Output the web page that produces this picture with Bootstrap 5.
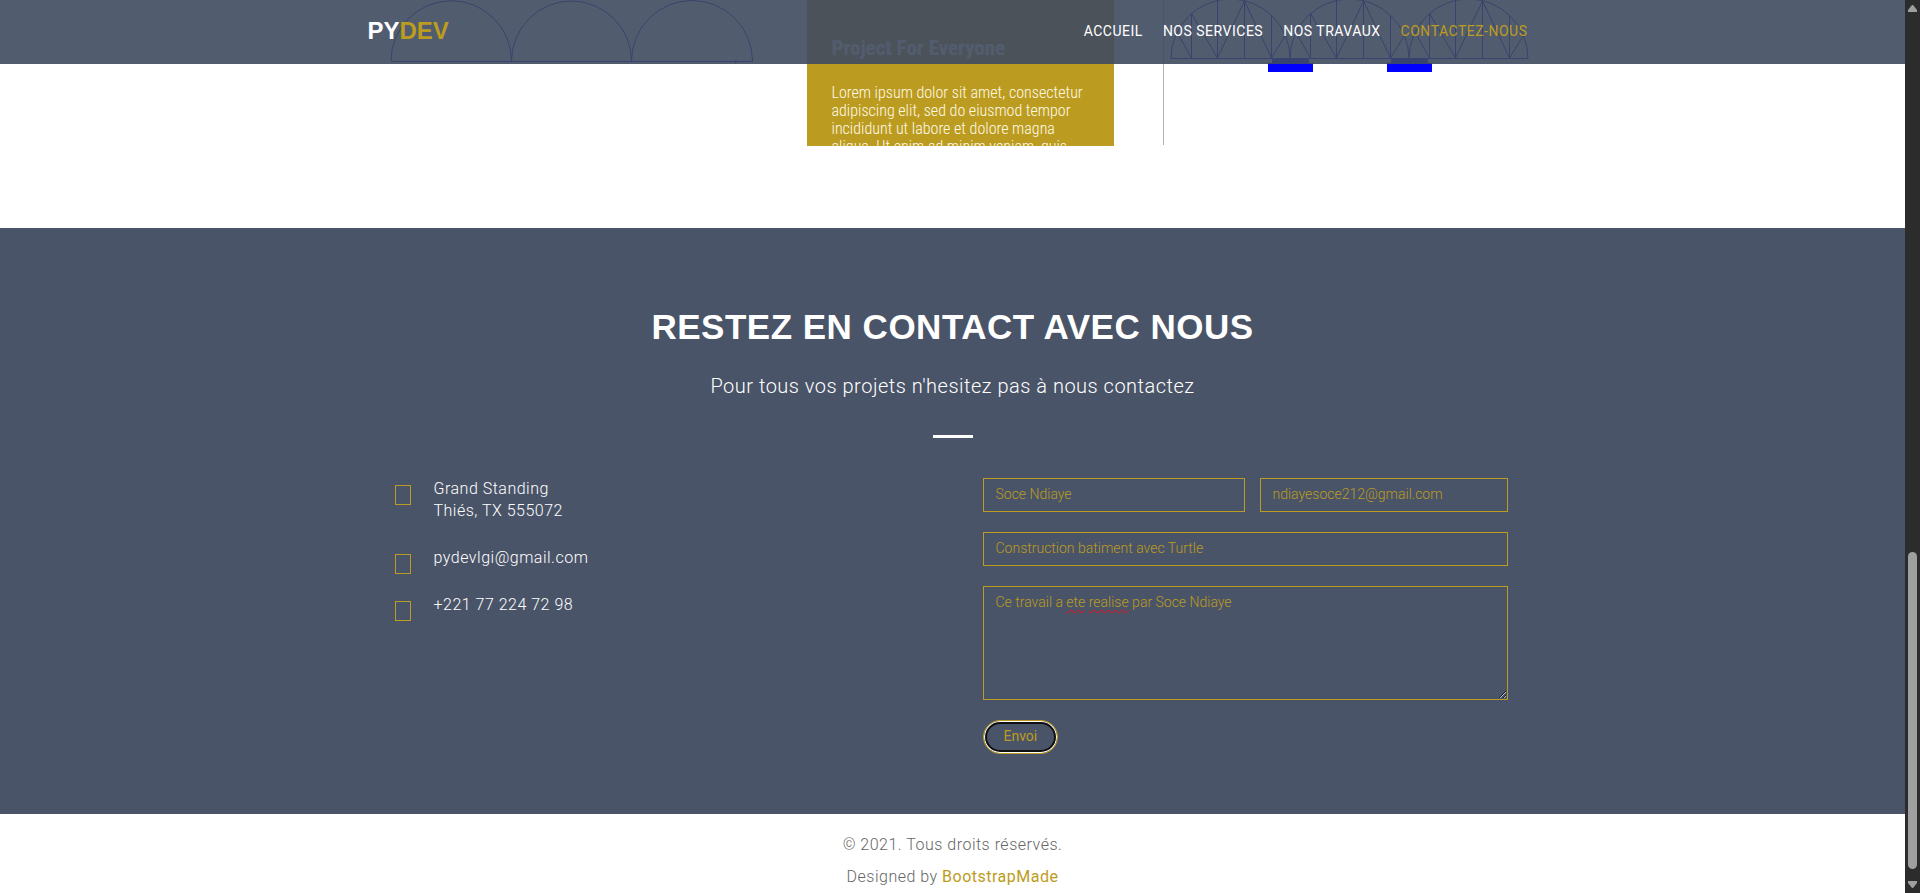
<!DOCTYPE html>
<html lang="fr">
<head>
<meta charset="utf-8">
<meta name="viewport" content="width=device-width, initial-scale=1">
<title>PYDEV - Contactez-nous</title>
<link rel="stylesheet" href="https://cdn.jsdelivr.net/npm/bootstrap@5.3.0/dist/css/bootstrap.min.css">
<style>
:root { --gold: #bc9c20; --slate: #4a5468; }
body { font-family: Roboto, "Liberation Sans", sans-serif; font-size: 16px; color: #666; background: #fff; }
.page-wrap { max-width: 1170px; margin-inline: auto; }
.gold-text { color: var(--gold); }

.topbar { background: rgba(63, 74, 95, .9); height: 64px; z-index: 5; }
.brand { font-family: "Liberation Sans", Arial, sans-serif; font-weight: 700; font-size: 24px; line-height: 62px; color: #fff; }
.topbar .nav-link { padding: 0 10px; font-size: 14px; font-weight: 400; line-height: 62px; letter-spacing: .5px; color: #fff; text-transform: uppercase; white-space: nowrap; }
.topbar .nav-link.active { color: var(--gold); }

.gallery { height: 228px; }
.gallery-grid { display: grid; grid-template-columns: 439fr 307fr 424fr; height: 146px; }
.gallery-grid svg { display: block; width: 100%; height: 146px; }
.project { background: var(--gold); padding: 36px 25px 0; height: 146px; overflow: hidden; white-space: nowrap; color: #fffbea; font-family: "Roboto Condensed", "Liberation Sans Narrow", Roboto, sans-serif; }
.project h3 { font-size: 21px; line-height: 25px; font-weight: 700; color: #fff; margin: 0 0 23px; }
.project p { font-size: 16px; line-height: 18px; font-weight: 300; margin: 0; }

.contact { background: var(--slate); color: #fff; padding: 77px 0 60px; }
.contact h2 { font-family: "Liberation Sans", Arial, sans-serif; font-weight: 700; font-size: 35px; line-height: 44px; letter-spacing: .5px; margin: 0 0 23px; }
.contact .intro { font-size: 20px; line-height: 28px; font-weight: 300; letter-spacing: .5px; margin: 0 0 35px; }
.rule { width: 40px; height: 3px; background: #fff; margin: 0 auto 40px; }
.contact address { font-weight: 300; line-height: 22px; letter-spacing: .5px; margin: 0; padding-left: 27px; }
.contact-line { display: flex; gap: 23px; margin-bottom: 25px; }
.glyph-box { flex: none; width: 16px; height: 20px; border: 1px solid var(--gold); margin-top: 7px; margin-bottom: -7px; }

.contact-form { padding: 0 30px; }
.field { font-size: 14px; font-weight: 300; line-height: 20px; color: var(--gold) !important; background: transparent !important; border: 1px solid var(--gold); border-radius: 0; padding: 5px 12px 7px; }
.pair { display: grid; grid-template-columns: 262fr 248fr; gap: 15px; }
.stack { display: grid; gap: 20px; }
.stack textarea { height: 114px; display: block; }
.spell { position: absolute; inset: 0; pointer-events: none; border-color: transparent; color: transparent !important; }
.spell span { text-decoration: underline wavy #f01020 1px; text-decoration-skip-ink: none; text-underline-offset: 2px; }
.send { justify-self: start; height: 34px; padding: 5px 20px 7px; font-size: 14px; line-height: 20px; color: var(--gold); border: 1px solid var(--gold); border-radius: 17px; background: transparent; box-shadow: inset 0 0 0 1px #fff, inset 0 0 0 3px #101010; }

footer { padding: 15px 0 0; letter-spacing: .5px; font-weight: 300; line-height: 32px; }
footer p { margin: 0; }
footer a { color: var(--gold); font-weight: 400; text-decoration: none; }

.scroll-track { width: 15px; height: 100vh; top: 0; background: #2c2c2c; flex: none; padding: 4px 3px; }
.scroll-track svg { display: block; width: 9px; height: 8px; fill: #9f9f9f; }
.scroll-space { flex: 540 0 0; }
.scroll-thumb { flex: 317 0 0; background: #9f9f9f; border-radius: 5px; margin-bottom: 12px; }
</style>
</head>
<body class="d-flex">
<div class="flex-grow-1 position-relative">
  <header class="topbar position-absolute top-0 start-0 end-0">
    <nav class="page-wrap d-flex justify-content-between">
      <a class="brand text-decoration-none" href="#">PY<span class="gold-text">DEV</span></a>
      <ul class="nav flex-nowrap">
        <li class="nav-item"><a class="nav-link" href="#">Accueil</a></li>
        <li class="nav-item"><a class="nav-link" href="#">Nos services</a></li>
        <li class="nav-item"><a class="nav-link" href="#">Nos travaux</a></li>
        <li class="nav-item"><a class="nav-link active" href="#contact">Contactez-nous</a></li>
      </ul>
    </nav>
  </header>

  <main>
    <section class="gallery">
      <div class="page-wrap gallery-grid">
        <svg viewBox="368 0 439 146" preserveAspectRatio="xMinYMin" fill="none" stroke="#0000d0" aria-hidden="true">
          <path d="M391 61A60 60 0 0 1 511.500 61A60 60 0 0 1 631.500 61A60 60 0 0 1 752.500 61M391 61.500H753M735 60l2 1.500-2 1.500"/>
        </svg>
        <article class="project">
          <h3>Project For Everyone</h3>
          <p>Lorem ipsum dolor sit amet, consectetur<br>adipiscing elit, sed do eiusmod tempor<br>incididunt ut labore et dolore magna<br>aliqua. Ut enim ad minim veniam, quis</p>
        </article>
        <svg viewBox="1114 0 424 146" preserveAspectRatio="xMinYMin" fill="none" stroke="#0000d0" aria-hidden="true">
          <path stroke="#b4b4b4" d="M1163.500 0V145"/>
          <defs>
            <path id="truss" d="M0 58.500A59.500 59.500 0 0 1 119 58.500ZM20.500 13.500V58M46.500 1V58M73.500 0V58M100.500 15V58M7 34L20.500 58M46.500 58L20.500 13.500M46.500 58L73.500 1L100.500 58L114 36"/>
          </defs>
          <use href="#truss" x="1171"/><use href="#truss" x="1290"/><use href="#truss" x="1409"/>
          <path fill="#0000ff" stroke="none" d="M1272 58h37v5h-37zM1391 58h37v5h-37zM1268 63h45v9h-45zM1387 63h45v9h-45z"/>
        </svg>
      </div>
    </section>

    <section class="contact" id="contact">
      <div class="text-center">
        <h2>RESTEZ EN CONTACT AVEC NOUS</h2>
        <p class="intro">Pour tous vos projets n'hesitez pas à nous contactez</p>
        <div class="rule"></div>
      </div>
      <div class="page-wrap row gx-0">
        <address class="col-6">
          <div class="contact-line"><span class="glyph-box"></span><span>Grand Standing<br>Thiés, TX 555072</span></div>
          <div class="contact-line"><span class="glyph-box"></span><span>pydevlgi@gmail.com</span></div>
          <div class="contact-line"><span class="glyph-box"></span><span>+221 77 224 72 98</span></div>
        </address>
        <form class="col-6 contact-form">
          <div class="stack">
            <div class="pair">
              <input class="form-control field" type="text" aria-label="Nom" value="Soce Ndiaye">
              <input class="form-control field" type="email" aria-label="Email" value="ndiayesoce212@gmail.com">
            </div>
            <input class="form-control field" type="text" aria-label="Sujet" value="Construction batiment avec Turtle">
            <div class="position-relative">
              <textarea class="form-control field" aria-label="Message" spellcheck="false">Ce travail a ete realise par Soce Ndiaye</textarea>
              <div class="field spell" aria-hidden="true">Ce travail a <span>ete</span> <span>realise</span></div>
            </div>
            <button class="send" type="button">Envoi</button>
          </div>
        </form>
      </div>
    </section>
  </main>

  <footer class="text-center">
    <p>© 2021. Tous droits réservés.</p>
    <p>Designed by <a href="#">BootstrapMade</a></p>
  </footer>
</div>
<div class="scroll-track position-sticky d-flex flex-column" aria-hidden="true">
  <svg viewBox="0 0 9 8"><path d="M4 1h1l4 5v2H0V6z"/></svg>
  <div class="scroll-space"></div>
  <div class="scroll-thumb"></div>
  <svg viewBox="0 0 9 8"><path d="M4 7h1l4-5V0H0v2z"/></svg>
</div>
<script src="https://cdn.jsdelivr.net/npm/bootstrap@5.3.0/dist/js/bootstrap.bundle.min.js"></script>
</body>
</html>
